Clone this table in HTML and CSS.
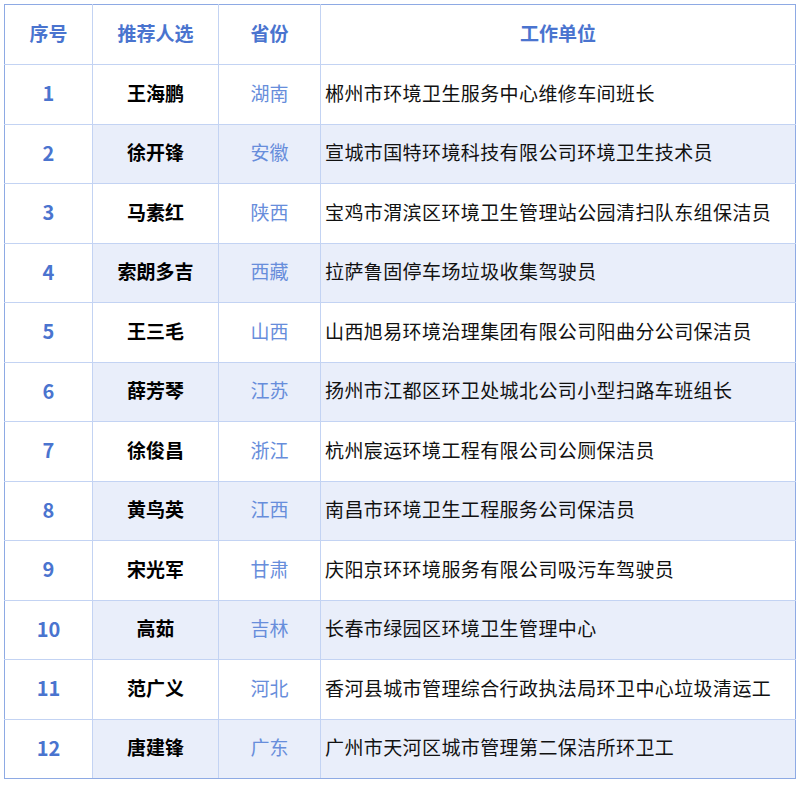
FILE: index.html
```html
<!DOCTYPE html>
<html lang="zh-CN">
<head>
<meta charset="utf-8">
<title>推荐人选</title>
<link rel="stylesheet" href="styles.css">
</head>
<body>
<table class="list">
  <colgroup>
    <col class="c-no"><col class="c-name"><col class="c-prov"><col class="c-unit">
  </colgroup>
  <thead>
    <tr class="head">
      <th>序号</th><th>推荐人选</th><th>省份</th><th>工作单位</th>
    </tr>
  </thead>
  <tbody>
    <tr><td class="no">1</td><td class="name">王海鹏</td><td class="prov">湖南</td><td class="unit">郴州市环境卫生服务中心维修车间班长</td></tr>
    <tr class="alt"><td class="no">2</td><td class="name">徐开锋</td><td class="prov">安徽</td><td class="unit">宣城市国特环境科技有限公司环境卫生技术员</td></tr>
    <tr><td class="no">3</td><td class="name">马素红</td><td class="prov">陕西</td><td class="unit">宝鸡市渭滨区环境卫生管理站公园清扫队东组保洁员</td></tr>
    <tr class="alt"><td class="no">4</td><td class="name">索朗多吉</td><td class="prov">西藏</td><td class="unit">拉萨鲁固停车场垃圾收集驾驶员</td></tr>
    <tr><td class="no">5</td><td class="name">王三毛</td><td class="prov">山西</td><td class="unit">山西旭易环境治理集团有限公司阳曲分公司保洁员</td></tr>
    <tr class="alt"><td class="no">6</td><td class="name">薛芳琴</td><td class="prov">江苏</td><td class="unit">扬州市江都区环卫处城北公司小型扫路车班组长</td></tr>
    <tr><td class="no">7</td><td class="name">徐俊昌</td><td class="prov">浙江</td><td class="unit">杭州宸运环境工程有限公司公厕保洁员</td></tr>
    <tr class="alt"><td class="no">8</td><td class="name">黄鸟英</td><td class="prov">江西</td><td class="unit">南昌市环境卫生工程服务公司保洁员</td></tr>
    <tr><td class="no">9</td><td class="name">宋光军</td><td class="prov">甘肃</td><td class="unit">庆阳京环环境服务有限公司吸污车驾驶员</td></tr>
    <tr class="alt"><td class="no">10</td><td class="name">高茹</td><td class="prov">吉林</td><td class="unit">长春市绿园区环境卫生管理中心</td></tr>
    <tr><td class="no">11</td><td class="name">范广义</td><td class="prov">河北</td><td class="unit">香河县城市管理综合行政执法局环卫中心垃圾清运工</td></tr>
    <tr class="alt"><td class="no">12</td><td class="name">唐建锋</td><td class="prov">广东</td><td class="unit">广州市天河区城市管理第二保洁所环卫工</td></tr>
  </tbody>
</table>
</body>
</html>
```
FILE: styles.css
```css
html, body {
  margin: 0;
  background: #ffffff;
}
body {
  padding: 4px 0 0 4px;
  font-family: "Noto Sans CJK SC", "Noto Sans", sans-serif;
}
.list {
  border-collapse: collapse;
  width: 791px;
  table-layout: fixed;
  border: 1px solid #8eaae4;
  font-size: 19px;
}
.c-no { width: 88px; }
.c-name { width: 126px; }
.c-prov { width: 102px; }
.c-unit { width: 475px; }
.list th, .list td {
  border: 1px solid #c3d3f3;
  padding: 0 0 2px 0;
  vertical-align: middle;
  line-height: 1.2;
}
.list tr:first-child th { border-top-color: #8eaae4; }
.list th:first-child, .list td:first-child { border-left-color: #8eaae4; }
.list th:last-child, .list td:last-child { border-right-color: #8eaae4; }
.list tbody tr:last-child td { border-bottom-color: #8eaae4; }
.head {
  height: 60px;
}
.head th {
  color: #4a74cf;
  font-weight: 700;
  text-align: center;
}
.list tbody tr {
  height: 59.5px;
}
.no {
  text-align: center;
  color: #4a74cf;
  font-weight: 700;
  font-size: 20px;
}
.name {
  text-align: center;
  color: #000000;
  font-weight: 700;
}
.prov {
  text-align: center;
  color: #678ddb;
}
.list .unit {
  text-align: left;
  padding-left: 4px;
  color: #111111;
  letter-spacing: 0.4px;
}
.alt .name, .alt .prov, .alt .unit {
  background: #e9eefa;
}
```
